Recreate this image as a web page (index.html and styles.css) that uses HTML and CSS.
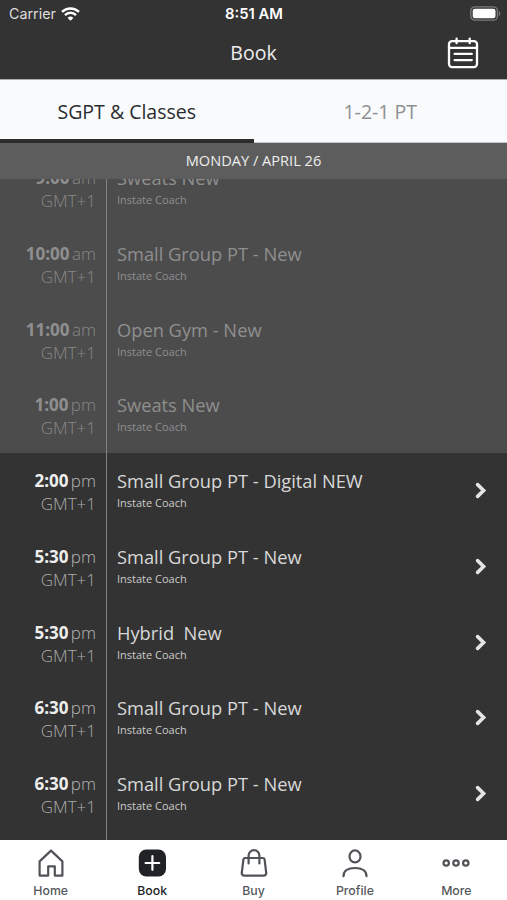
FILE: index.html
```html
<!DOCTYPE html>
<html lang="en">
<head>
  <meta charset="UTF-8" />
  <meta name="viewport" content="width=device-width, initial-scale=1" />
  <title>Book</title>
  <link rel="stylesheet" href="styles.css">
</head>
<body>
  <div class="status-bar">
    <div class="carrier">
      <span>Carrier</span>
      <svg width="19" height="14" viewBox="0 0 19 14" fill="none" stroke="#fff" stroke-width="2.5">
        <path d="M1 4.9a12.2 12.2 0 0 1 17 0" />
        <path d="M4 8.1a7.9 7.9 0 0 1 11 0" />
        <path d="M9.5 13.8 6.6 10.9a4.2 4.2 0 0 1 5.8 0z" fill="#fff" stroke="none" />
      </svg>
    </div>
    <div class="clock">8:51 AM</div>
    <div class="battery">
      <svg width="31" height="15" viewBox="0 0 31 15">
        <rect x="0.8" y="0.8" width="26.6" height="13.4" rx="4" fill="none" stroke="#7c7c7c" stroke-width="1.3" />
        <rect x="2.7" y="2.7" width="22.8" height="9.6" rx="2.2" fill="#fff" />
        <path d="M28.8 5.2c2 .7 2 3.9 0 4.6z" fill="#7c7c7c" />
      </svg>
    </div>
  </div>

  <div class="navbar">
    <h1>Book</h1>
    <svg class="calendar" width="32" height="32" viewBox="0 0 32 32" fill="none" stroke="#fff" stroke-width="2.3" stroke-linecap="round">
      <rect x="2" y="4.1" width="28" height="26" rx="3" />
      <path d="M2 10.9h28M9.6 1.6v4.6M22.7 1.6v4.6" />
      <path d="M7.6 16.9h17.2M7.6 23.1h17.2" />
    </svg>
  </div>

  <div class="tabs">
    <div class="tab active">SGPT &amp; Classes</div>
    <div class="tab">1-2-1 PT</div>
  </div>

  <div class="date-header">MONDAY / APRIL 26</div>

  <div class="schedule">
    <div class="schedule-list">
      <div class="row past">
        <div class="time"><div><b>9:00</b> am</div><div class="zone">GMT+1</div></div>
        <div class="info"><div class="name">Sweats New</div><div class="coach">Instate Coach</div></div>
      </div>
      <div class="row past">
        <div class="time"><div><b>10:00</b> am</div><div class="zone">GMT+1</div></div>
        <div class="info"><div class="name">Small Group PT - New</div><div class="coach">Instate Coach</div></div>
      </div>
      <div class="row past">
        <div class="time"><div><b>11:00</b> am</div><div class="zone">GMT+1</div></div>
        <div class="info"><div class="name">Open Gym - New</div><div class="coach">Instate Coach</div></div>
      </div>
      <div class="row past">
        <div class="time"><div><b>1:00</b> pm</div><div class="zone">GMT+1</div></div>
        <div class="info"><div class="name">Sweats New</div><div class="coach">Instate Coach</div></div>
      </div>
      <div class="row">
        <div class="time"><div><b>2:00</b> pm</div><div class="zone">GMT+1</div></div>
        <div class="info"><div class="name">Small Group PT - Digital NEW</div><div class="coach">Instate Coach</div></div>
        <svg class="chevron" width="12" height="17" viewBox="0 0 12 17"><path d="M2.6 2.6 8.6 8.5 2.6 14.4" /></svg>
      </div>
      <div class="row">
        <div class="time"><div><b>5:30</b> pm</div><div class="zone">GMT+1</div></div>
        <div class="info"><div class="name">Small Group PT - New</div><div class="coach">Instate Coach</div></div>
        <svg class="chevron" width="12" height="17" viewBox="0 0 12 17"><path d="M2.6 2.6 8.6 8.5 2.6 14.4" /></svg>
      </div>
      <div class="row">
        <div class="time"><div><b>5:30</b> pm</div><div class="zone">GMT+1</div></div>
        <div class="info"><div class="name">Hybrid&nbsp; New</div><div class="coach">Instate Coach</div></div>
        <svg class="chevron" width="12" height="17" viewBox="0 0 12 17"><path d="M2.6 2.6 8.6 8.5 2.6 14.4" /></svg>
      </div>
      <div class="row">
        <div class="time"><div><b>6:30</b> pm</div><div class="zone">GMT+1</div></div>
        <div class="info"><div class="name">Small Group PT - New</div><div class="coach">Instate Coach</div></div>
        <svg class="chevron" width="12" height="17" viewBox="0 0 12 17"><path d="M2.6 2.6 8.6 8.5 2.6 14.4" /></svg>
      </div>
      <div class="row">
        <div class="time"><div><b>6:30</b> pm</div><div class="zone">GMT+1</div></div>
        <div class="info"><div class="name">Small Group PT - New</div><div class="coach">Instate Coach</div></div>
        <svg class="chevron" width="12" height="17" viewBox="0 0 12 17"><path d="M2.6 2.6 8.6 8.5 2.6 14.4" /></svg>
      </div>
      <div class="row">
        <div class="time"></div>
        <div class="info"></div>
      </div>
    </div>
  </div>

  <div class="tab-bar">
    <div class="tab-item">
      <svg width="30" height="30" viewBox="0 0 30 30">
        <path d="M3.6 13.4 15 2.6l11.4 10.8v14.2h-7.6v-9.3h-6.6v9.3H3.6z" />
      </svg>
      <span>Home</span>
    </div>
    <div class="tab-item active">
      <svg width="30" height="30" viewBox="0 0 30 30">
        <rect class="solid" x="1.8" y="1.6" width="27.2" height="26.8" rx="7.5" />
        <path class="plus" d="M15.4 8.2v13.6M8.6 15h13.6" />
      </svg>
      <span>Book</span>
    </div>
    <div class="tab-item">
      <svg width="30" height="30" viewBox="0 0 30 30">
        <path d="M6.2 10h17.6a1.8 1.8 0 0 1 1.8 1.5l1.6 13.3a2.4 2.4 0 0 1-2.4 2.8H5.2a2.4 2.4 0 0 1-2.4-2.8l1.6-13.3A1.8 1.8 0 0 1 6.2 10z" />
        <path d="M9.6 15.4V7.6a5.4 5.4 0 0 1 10.8 0v7.8" />
      </svg>
      <span>Buy</span>
    </div>
    <div class="tab-item">
      <svg width="30" height="30" viewBox="0 0 30 30">
        <ellipse cx="15" cy="8.4" rx="5.5" ry="6" />
        <path d="M3.5 28.2c0-5 4.2-8.2 11.5-8.2s11.5 3.2 11.5 8.2" />
      </svg>
      <span>Profile</span>
    </div>
    <div class="tab-item">
      <svg width="30" height="30" viewBox="0 0 30 30">
        <circle cx="5.2" cy="15" r="2.7" />
        <circle cx="15" cy="15" r="2.7" />
        <circle cx="24.8" cy="15" r="2.7" />
      </svg>
      <span>More</span>
    </div>
  </div>
</body>
</html>
```
FILE: styles.css
```css
* {
  box-sizing: border-box;
}

body {
  font-family: "Open Sans", sans-serif;
  margin: 0;
  height: 900px;
  background: #333;
  color: #ddd;
  display: flex;
  flex-direction: column;
  overflow: hidden;
}

.status-bar {
  height: 27px;
  padding: 0 6px 0 9px;
  display: grid;
  grid-template-columns: 1fr auto 1fr;
  align-items: center;
  font-family: Inter, sans-serif;
  font-size: 14.3px;
  flex-shrink: 0;
}

.carrier {
  display: flex;
  align-items: center;
  gap: 5px;
}

.clock {
  color: #fff;
  font-size: 14.8px;
  font-weight: 600;
  margin-right: 2px;
}

.battery {
  display: flex;
  justify-content: flex-end;
}

.navbar {
  height: 52px;
  padding: 0 28px;
  display: grid;
  grid-template-columns: 1fr auto 1fr;
  align-items: center;
  flex-shrink: 0;
}

h1 {
  grid-column: 2;
  margin: 0 0 2px;
  font-size: 19.5px;
  font-weight: 400;
  color: #eee;
}

.calendar {
  justify-self: end;
}

.tabs {
  display: flex;
  height: 64px;
  border-top: 1px solid #aaa;
  background: #f9fafc;
  flex-shrink: 0;
}

.tab {
  flex: 1;
  display: flex;
  align-items: center;
  justify-content: center;
  font-size: 19.5px;
  color: #8e8f93;
  border-bottom: 1px solid #c5c6c8;
}

.tab.active {
  color: #2b2c2f;
  padding-top: 3px;
  border-bottom: 4px solid #2c2c2c;
}

.date-header {
  height: 36px;
  line-height: 34px;
  background: #5d5d5d;
  color: #eee;
  font-size: 14.6px;
  text-align: center;
  flex-shrink: 0;
}

.schedule {
  flex: 1;
  min-height: 0;
  overflow: hidden;
}

/* list is scrolled a little, first row sits under the date */
.schedule-list {
  margin-top: -29px;
}

.row {
  display: flex;
  height: 75.75px;
  padding-right: 20px;
}

.row.past {
  background: #4c4c4c;
}

.time {
  width: 107.4px;
  padding: 16px 10.4px 0 0;
  border-right: 1px solid #858585;
  font-size: 17px;
  font-weight: 300;
  line-height: 23px;
  text-align: right;
  color: #b8b8b8;
  word-spacing: -2px;
}

.time b {
  font-weight: 700;
  color: #eee;
}

.zone {
  color: #acacac;
}

.info {
  flex: 1;
  padding: 15px 0 0 9.6px;
}

.name {
  font-size: 18.3px;
  line-height: 26px;
  color: #d8d8d8;
}

.coach {
  font-size: 11px;
  line-height: 17px;
  color: #ccc;
}

.past .time,
.past .zone {
  color: #888;
}

.past b,
.past .name,
.past .coach {
  color: #8f8f8f;
}

.chevron {
  margin-top: 29px;
  fill: none;
  stroke: #e4e4e4;
  stroke-width: 3.6;
  stroke-linecap: round;
}

.tab-bar {
  height: 60px;
  display: flex;
  background: #fff;
  flex-shrink: 0;
}

.tab-item {
  flex: 1;
  display: flex;
  flex-direction: column;
  align-items: center;
  padding-top: 8px;
  font-family: Inter, sans-serif;
  font-size: 12.3px;
  font-weight: 500;
  line-height: 15px;
  color: #55585c;
}

.tab-item span {
  margin-top: 5px;
}

.tab-item svg {
  fill: none;
  stroke: #505357;
  stroke-width: 2.2;
  stroke-linejoin: round;
  stroke-linecap: round;
}

.tab-item.active {
  color: #222427;
}

.tab-item .solid {
  fill: #202225;
  stroke: none;
}

.tab-item .plus {
  stroke: #fff;
}
```
